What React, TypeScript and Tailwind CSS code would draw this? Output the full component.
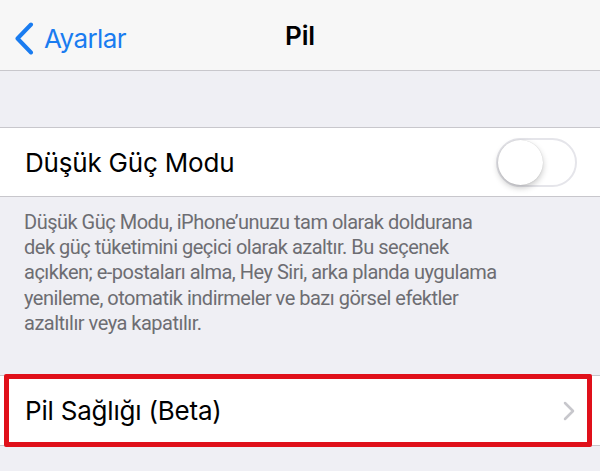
import React from 'react';

const font = { fontFamily: 'Inter, "Liberation Sans", Arial, sans-serif' };

function Toggle() {
  return (
    <div className="relative w-[81px] h-[49px] rounded-full bg-white border-[2px] border-[#e5e5ea]">
      <div className="absolute left-0 top-0 w-[45px] h-[45px] rounded-full bg-white shadow-[0_3px_6px_rgba(0,0,0,0.22),0_0_1px_rgba(0,0,0,0.2)]" />
    </div>
  );
}

export default function App() {
  return (
    <div className="w-[600px] h-[471px] overflow-hidden bg-[#efeff4] antialiased" style={font}>
      <div className="relative h-[71px] bg-[#f7f7f7] border-b border-[#c8c7cc] flex items-center justify-center">
        <div className="absolute left-[14px] top-[19px] flex items-center gap-[10px]">
          <svg width="20" height="33" viewBox="0 0 20 33" fill="none">
            <path d="M17 2.5 L3.5 16.5 L17 30.5" stroke="#1a7cf0" strokeWidth="4" strokeLinecap="round" strokeLinejoin="round" />
          </svg>
          <span className="text-[26px] text-[#1a7cf0] tracking-[-0.6px]">Ayarlar</span>
        </div>
        <span className="text-[26px] font-semibold text-black tracking-[-0.2px]">Pil</span>
      </div>

      <div className="h-[56px]" />

      <div className="h-[70px] bg-white border-y border-[#c8c7cc] flex items-center justify-between pl-[25px] pr-[23px]">
        <span className="text-[26px] text-black tracking-[-0.2px]">Düşük Güç Modu</span>
        <Toggle />
      </div>

      <div
        className="pl-[24px] pt-[13px] text-[20px] leading-[25.2px] text-[#6d6d72] tracking-[-0.5px] h-[178px]"
        style={{ fontFamily: 'Roboto, "Liberation Sans", Arial, sans-serif' }}
      >
        Düşük Güç Modu, iPhone’unuzu tam olarak doldurana
        <br />
        dek güç tüketimini geçici olarak azaltır. Bu seçenek
        <br />
        açıkken; e-postaları alma, Hey Siri, arka planda uygulama
        <br />
        yenileme, otomatik indirmeler ve bazı görsel efektler
        <br />
        azaltılır veya kapatılır.
      </div>

      <div className="relative h-[71px] bg-white border-y border-[#c8c7cc] flex items-center justify-between pl-[25px] pr-[25px]">
        <span className="text-[26px] text-black tracking-[-0.2px]">Pil Sağlığı (Beta)</span>
        <svg width="12" height="20" viewBox="0 0 12 20" fill="none">
          <path d="M2 2 L10 10 L2 18" stroke="#c7c7cc" strokeWidth="2.5" strokeLinecap="round" strokeLinejoin="round" />
        </svg>
        <div className="absolute left-[4px] right-[8px] top-[-2px] bottom-[-2px] border-[5px] border-[#e0101a] rounded-[2px]" />
      </div>
    </div>
  );
}
